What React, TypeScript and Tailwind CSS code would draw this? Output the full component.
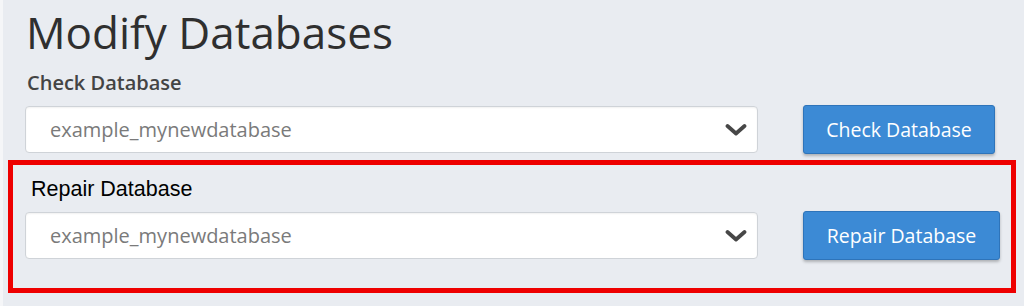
import React from 'react';

const font = { fontFamily: '"Open Sans", "Liberation Sans", sans-serif' };

function Chevron() {
  return (
    <svg width="22" height="14" viewBox="0 0 22 14" className="shrink-0">
      <polyline points="2.5,3 11,10.5 19.5,3" fill="none" stroke="#474747" strokeWidth="3.8" strokeLinecap="round" strokeLinejoin="round" />
    </svg>
  );
}

function DbSelect() {
  return (
    <div className="w-[733px] h-[47px] bg-white border border-[#cfd3d8] rounded-[4px] flex items-center justify-between pl-[24px] pr-[10px] shadow-[inset_0_1px_2px_rgba(0,0,0,0.06)]">
      <span className="text-[20px] text-[#7a7a7a]">example_mynewdatabase</span>
      <Chevron />
    </div>
  );
}

function DbButton({ label, width }: { label: string; width: string }) {
  return (
    <button
      className={`${width} h-[49px] bg-[#3c8ad5] border border-[#2e74ba] rounded-[3px] text-white text-[19.5px] font-medium shadow-[0_2px_3px_rgba(0,0,0,0.25)]`}
    >
      {label}
    </button>
  );
}

export default function App() {
  return (
    <div className="w-[1024px] h-[306px] bg-[#e9ecf1] border-l-[3px] border-[#f5f6f8] overflow-hidden" style={font}>
      <div className="pl-[22px] pt-[8px]">
        <h1 className="text-[44px] leading-[48px] text-[#2f2f2f] font-normal pl-[1px]">Modify Databases</h1>
        <div className="mt-[15px] text-[20px] leading-[24px] font-semibold text-[#444] pl-[2px]">Check Database</div>
        <div className="mt-[10px] flex items-center gap-[45px]">
          <DbSelect />
          <DbButton label="Check Database" width="w-[192px]" />
        </div>
      </div>
      <div className="ml-[5px] mt-[6px] w-[1008px] h-[133px] border-[5px] border-[#ee0000] pl-[12px] pt-[12px]">
        <div className="text-[21.5px] leading-[24px] text-black pl-[6px]" style={{ fontFamily: '"Liberation Sans", Arial, sans-serif' }}>
          Repair Database
        </div>
        <div className="mt-[10px] flex items-center gap-[45px]">
          <DbSelect />
          <DbButton label="Repair Database" width="w-[197px]" />
        </div>
      </div>
    </div>
  );
}
